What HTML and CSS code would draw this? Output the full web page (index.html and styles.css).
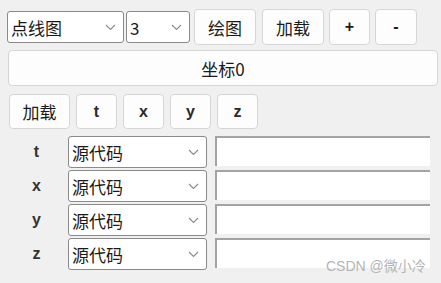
FILE: index.html
```html
<!DOCTYPE html>
<html>
<head>
<link rel="stylesheet" href="styles.css">
</head>
<body>
<div class="panel">
	<div class="toolbar">
		<div class="combo combo-type"><span>点线图</span><svg class="chev" width="11" height="7" viewBox="0 0 11 7"><path d="M1 1 L5.5 5.5 L10 1" fill="none" stroke="#8a8a8a" stroke-width="1.1"/></svg></div>
		<div class="combo combo-dim"><span>3</span><svg class="chev" width="11" height="7" viewBox="0 0 11 7"><path d="M1 1 L5.5 5.5 L10 1" fill="none" stroke="#8a8a8a" stroke-width="1.1"/></svg></div>
		<button class="btn btn-draw">绘图</button>
		<button class="btn btn-load">加载</button>
		<button class="btn btn-plus">+</button>
		<button class="btn btn-minus">-</button>
	</div>
	<button class="btn btn-axis">坐标0</button>
	<div class="axis-bar">
		<button class="btn btn-load2">加载</button>
		<button class="btn btn-var">t</button>
		<button class="btn btn-var">x</button>
		<button class="btn btn-var">y</button>
		<button class="btn btn-var">z</button>
	</div>
	<div class="rows">
		<div class="row"><span class="lbl">t</span><div class="combo combo-src"><span>源代码</span><svg class="chev" width="11" height="7" viewBox="0 0 11 7"><path d="M1 1 L5.5 5.5 L10 1" fill="none" stroke="#8a8a8a" stroke-width="1.1"/></svg></div><div class="field"></div></div>
		<div class="row"><span class="lbl">x</span><div class="combo combo-src"><span>源代码</span><svg class="chev" width="11" height="7" viewBox="0 0 11 7"><path d="M1 1 L5.5 5.5 L10 1" fill="none" stroke="#8a8a8a" stroke-width="1.1"/></svg></div><div class="field"></div></div>
		<div class="row"><span class="lbl">y</span><div class="combo combo-src"><span>源代码</span><svg class="chev" width="11" height="7" viewBox="0 0 11 7"><path d="M1 1 L5.5 5.5 L10 1" fill="none" stroke="#8a8a8a" stroke-width="1.1"/></svg></div><div class="field"></div></div>
		<div class="row"><span class="lbl">z</span><div class="combo combo-src"><span>源代码</span><svg class="chev" width="11" height="7" viewBox="0 0 11 7"><path d="M1 1 L5.5 5.5 L10 1" fill="none" stroke="#8a8a8a" stroke-width="1.1"/></svg></div><div class="field"></div></div>
	</div>
	<div class="mark">CSDN @微小冷</div>
</div>
</body>
</html>
```
FILE: styles.css
```css
html, body {
	margin:0;
	background-color:#f0f0f0;
}
body {
	font:17px "Noto Sans CJK SC", "Liberation Sans", sans-serif;
	color:#1a1a1a;
	width:441px;
	height:283px;
	overflow:hidden;
}
.panel {
	position:relative;
	padding:9px 0 0 7px;
}
.toolbar {
	display:flex;
	align-items:center;
	height:36px;
}
.combo {
	box-sizing:border-box;
	display:flex;
	align-items:center;
	justify-content:space-between;
	height:32px;
	padding:0 7px 0 3px;
	background-color:#fff;
	border:1px solid #8a8a8a;
	border-radius:3px;
	line-height:1;
}
.combo span {
	margin-top:1px;
}
.combo-type {
	width:117px;
}
.combo-dim {
	width:64px;
	margin-left:2px;
}
.btn {
	box-sizing:border-box;
	font:inherit;
	color:inherit;
	padding:0;
	background-color:#fdfdfd;
	border:1px solid #d6d6d6;
	border-radius:4px;
	height:36px;
	line-height:1;
}
.btn-draw {
	width:62px;
	margin-left:4px;
}
.btn-load {
	width:62px;
	margin-left:6px;
}
.btn-plus {
	width:41px;
	margin-left:5px;
	font:600 16px "Liberation Sans", sans-serif;
}
.btn-minus {
	width:42px;
	margin-left:5px;
	font:600 16px "Liberation Sans", sans-serif;
}
.btn-axis {
	display:block;
	width:430px;
	height:36px;
	margin:5px 0 0 1px;
}
.axis-bar {
	display:flex;
	gap:6px;
	margin:8px 0 0 2px;
}
.axis-bar .btn {
	height:35px;
}
.btn-load2 {
	width:61px;
}
.btn-var {
	width:41px;
	font:bold 16px "Liberation Sans", sans-serif;
	color:#2a2a2a;
}
.rows {
	display:flex;
	flex-direction:column;
	gap:2px;
	margin-top:7px;
}
.row {
	display:flex;
	align-items:flex-start;
	height:32px;
}
.lbl {
	width:59px;
	text-align:center;
	font:bold 16px/32px "Liberation Sans", sans-serif;
	color:#333;
}
.combo-src {
	width:139px;
	margin-left:2px;
}
.field {
	box-sizing:border-box;
	width:215px;
	height:30px;
	margin-left:8px;
	background-color:#fff;
	border-top:2px solid #a3a3a3;
	border-left:2px solid #a3a3a3;
}
.mark {
	position:absolute;
	left:326px;
	top:255px;
	font:14px "Liberation Sans", "Noto Sans CJK SC", sans-serif;
	color:#b4b4b4;
}
```
